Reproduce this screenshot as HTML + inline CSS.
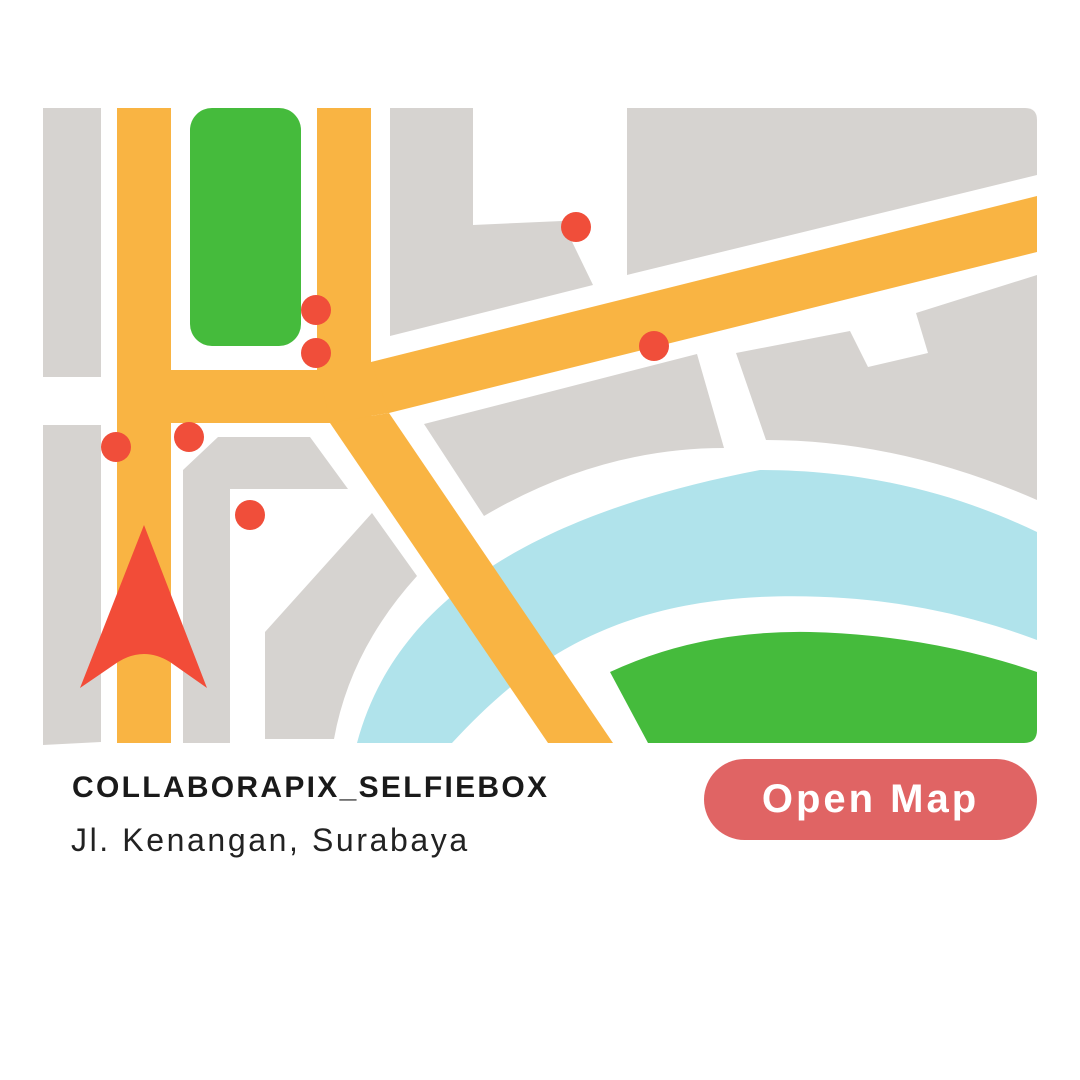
<!DOCTYPE html>
<html><head><meta charset="utf-8"><style>
html,body{margin:0;padding:0;background:#fff;width:1080px;height:1080px;overflow:hidden;font-family:"Liberation Sans",sans-serif}
.t1{position:absolute;left:72px;top:771px;font-size:30px;font-weight:bold;color:#1a1a1a;letter-spacing:2.3px}
.t2{position:absolute;left:71px;top:822px;font-size:32px;color:#222;letter-spacing:2.6px}
.btn{position:absolute;left:704px;top:759px;width:333px;height:81px;border-radius:41px;background:#e06464;color:#fff;font-size:40px;text-align:center;line-height:81px;letter-spacing:3px;font-weight:bold}
</style></head><body>
<svg width="1080" height="1080" style="position:absolute;left:0;top:0">
<g fill="#d6d3d0">
<rect x="43" y="108" width="58" height="269"/>
<polygon points="43,425 101,425 101,742 43,745"/>
<polygon points="390,108 473,108 473,225 562,221 593,285 390,336"/>
<path d="M627,108 L1025,108 Q1037,108 1037,120 L1037,175 L627,275 Z"/>
<path d="M736,353 L850,331 L868,367 L928,353 L916,313 L1037,275 L1037,500 Q900,440 766,440 Z"/>
<path d="M424,424 L697,354 L724,448 Q600,448 484,516 Z"/>
<polygon points="183,470 218,437 310,437 348,489 230,489 230,743 183,743"/>
<path d="M265,632 L372,513 L417,576 Q350,650 334,739 L265,739 Z"/>
</g>
<path fill="#b0e3eb" d="M357,743 C390,620 500,520 760,470 C880,470 970,500 1037,532 L1037,640 C970,615 880,592 760,597 C600,605 520,670 452,743 Z"/>
<path fill="#45bb3c" d="M610,672 Q700,630 810,632 Q930,635 1037,672 L1037,730 Q1037,743 1024,743 L648,743 Z"/>
<rect x="190" y="108" width="111" height="238" rx="22" fill="#45bb3c"/>
<g fill="#f9b443">
<rect x="117" y="108" width="54" height="635"/>
<rect x="317" y="108" width="54" height="262"/>
<rect x="117" y="370" width="254" height="53"/>
<polygon points="371,362 1037,196 1037,252 389,413 371,413"/>
<polygon points="330,423 389,413 613,743 548,743"/>
<polygon points="317,362 371,362 389,413 330,423"/>
</g>
<g fill="#f04e3a">
<circle cx="576" cy="227" r="15"/><circle cx="316" cy="310" r="15"/><circle cx="316" cy="353" r="15"/>
<circle cx="654" cy="346" r="15"/><circle cx="189" cy="437" r="15"/><circle cx="116" cy="447" r="15"/><circle cx="250" cy="515" r="15"/>
</g>
<path fill="#f24c38" d="M144,525 L207,688 L170,662 Q144,646 118,662 L80,688 Z"/>
</svg>
<div class="t1">COLLABORAPIX_SELFIEBOX</div>
<div class="t2">Jl. Kenangan, Surabaya</div>
<div class="btn">Open Map</div>
</body></html>
